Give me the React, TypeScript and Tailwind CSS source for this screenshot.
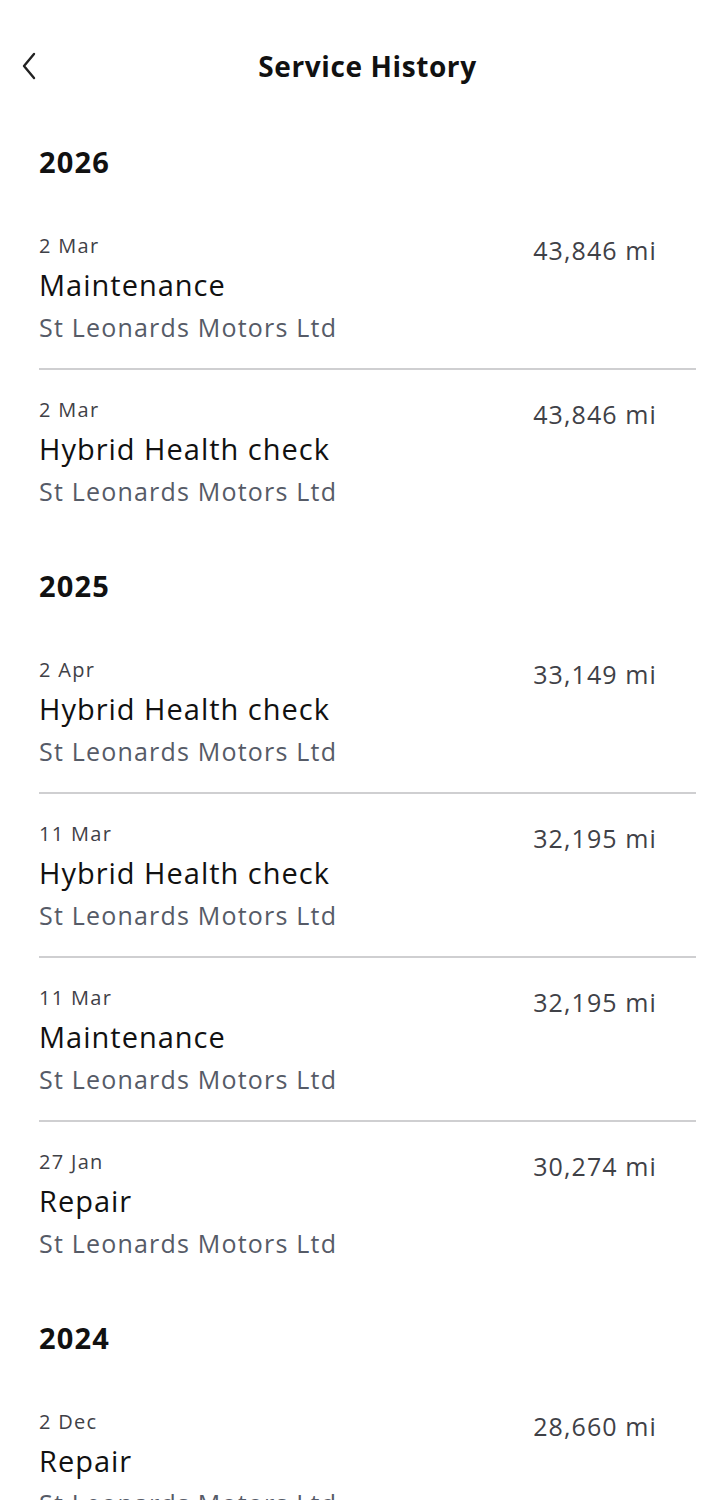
const groups = [
  {
    year: '2026',
    items: [
      { date: '2 Mar', title: 'Maintenance', place: 'St Leonards Motors Ltd', miles: '43,846 mi' },
      { date: '2 Mar', title: 'Hybrid Health check', place: 'St Leonards Motors Ltd', miles: '43,846 mi' },
    ],
  },
  {
    year: '2025',
    items: [
      { date: '2 Apr', title: 'Hybrid Health check', place: 'St Leonards Motors Ltd', miles: '33,149 mi' },
      { date: '11 Mar', title: 'Hybrid Health check', place: 'St Leonards Motors Ltd', miles: '32,195 mi' },
      { date: '11 Mar', title: 'Maintenance', place: 'St Leonards Motors Ltd', miles: '32,195 mi' },
      { date: '27 Jan', title: 'Repair', place: 'St Leonards Motors Ltd', miles: '30,274 mi' },
    ],
  },
  {
    year: '2024',
    items: [
      { date: '2 Dec', title: 'Repair', place: 'St Leonards Motors Ltd', miles: '28,660 mi' },
    ],
  },
];

const App = () => {
  return (
    <div className="h-[1500px] overflow-hidden bg-white text-[#111111] font-['Open_Sans',sans-serif]">
      {/* Top bar */}
      <header className="relative pt-[46px] h-[86px] flex items-center justify-center">
        <button className="absolute left-[14px] top-[48px] w-[30px] h-[36px] flex items-center justify-center">
          <svg width="18" height="28" viewBox="0 0 18 28" fill="none">
            <polyline points="14,2 4,14 14,26" stroke="#222" strokeWidth="2.4" strokeLinecap="round" strokeLinejoin="round" />
          </svg>
        </button>
        <h1 className="h-[40px] leading-[40px] text-[28px] font-bold tracking-[0.6px] pl-[16px]">Service History</h1>
      </header>

      <main className="pl-[39px] pr-[23px]">
        {groups.map((g, gi) => (
          <section key={g.year} className={gi === 0 ? 'mt-[59px]' : 'mt-[37px]'}>
            <h2 className="h-[34px] leading-[34px] text-[29px] font-bold tracking-[1.2px] mb-[27px]">{g.year}</h2>
            <div className="divide-y-2 divide-[#cfcfd1]">
              {g.items.map((it, i) => (
                <div key={i} className="flex justify-between pt-[28px] pb-[26px]">
                  <div className="flex flex-col">
                    <span className="h-[24px] leading-[24px] text-[20px] tracking-[1.3px] text-[#3f4147]">{it.date}</span>
                    <span className="mt-[10px] h-[34px] leading-[34px] text-[29px] tracking-[1px] text-[#111]">{it.title}</span>
                    <span className="mt-[10px] h-[30px] leading-[30px] text-[25px] tracking-[1.2px] text-[#565b67]">{it.place}</span>
                  </div>
                  <span className="mt-[-11px] mr-[39px] h-[30px] leading-[30px] text-[25px] tracking-[1.1px] text-[#3f4147] translate-y-[12px]">{it.miles}</span>
                </div>
              ))}
            </div>
          </section>
        ))}
      </main>
    </div>
  );
};

export default App;
